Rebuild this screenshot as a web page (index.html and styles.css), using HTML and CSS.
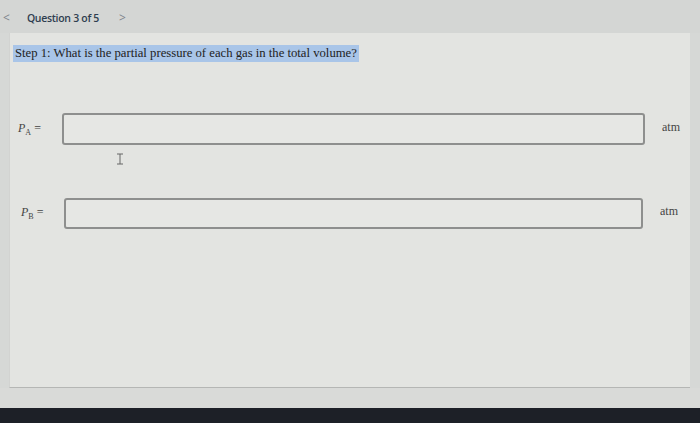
FILE: index.html
```html
<!DOCTYPE html>
<html>
<head>
<meta charset="utf-8">
<link rel="stylesheet" href="styles.css">
</head>
<body>
<div class="screen">
  <div class="header">
    <span class="nav prev">&lt;</span>
    <span class="qtitle">Question 3 of 5</span>
    <span class="nav next">&gt;</span>
  </div>
  <div class="panel">
    <div class="step"><span class="hl">Step 1: What is the partial pressure of each gas in the total volume?</span></div>
    <div class="row row-a">
      <span class="label"><i>P</i><sub>A</sub> =</span>
      <div class="box"></div>
      <span class="unit">atm</span>
    </div>
    <div class="cursor">
      <svg width="8" height="12" viewBox="0 0 8 12"><path d="M1 1h6M4 1v10M1 11h6" stroke="#666" stroke-width="1" fill="none"/></svg>
    </div>
    <div class="row row-b">
      <span class="label"><i>P</i><sub>B</sub> =</span>
      <div class="box"></div>
      <span class="unit">atm</span>
    </div>
  </div>
  <div class="gap"></div>
  <div class="bezel"></div>
</div>
</body>
</html>
```
FILE: styles.css
```css
html, body {
  margin: 0;
  padding: 0;
}
body {
  width: 700px;
  height: 423px;
  overflow: hidden;
  background: #d6d8d6;
}
.screen {
  display: flex;
  flex-direction: column;
  height: 423px;
}
.header {
  height: 33px;
  display: flex;
  align-items: center;
  background: #d4d6d4;
  font-family: "Open Sans", "Liberation Sans", sans-serif;
  color: #2f3e50;
  padding-top: 2px;
  box-sizing: border-box;
}
.nav {
  font-size: 12px;
  color: #7f858c;
}
.prev {
  margin-left: 3px;
}
.qtitle {
  font-size: 10.5px;
  font-weight: 600;
  margin-left: 17px;
  letter-spacing: -0.3px;
}
.next {
  margin-left: 20px;
}
.panel {
  margin-left: 9px;
  width: 681px;
  height: 355px;
  background: #e3e4e1;
  border-bottom: 1px solid #b5b6b4;
  border-left: 1px solid #d2d3d1;
  box-sizing: border-box;
  padding-top: 10px;
  position: relative;
  font-family: "Liberation Serif", "Times New Roman", serif;
  color: #333;
}
.step {
  padding-left: 3px;
  height: 17px;
}
.hl {
  background: #a9c5e8;
  font-size: 12.7px;
  line-height: 17px;
  color: #222;
  padding: 0 2px 0 2px;
  display: inline-block;
}
.row {
  display: flex;
  align-items: center;
}
.row-a {
  margin-top: 53px;
  height: 32px;
}
.row-b {
  margin-top: 53px;
  height: 31px;
}
.label {
  font-size: 12px;
  color: #444;
  width: 52px;
  padding-left: 8px;
  box-sizing: border-box;
  white-space: nowrap;
}
.label sub {
  font-size: 8px;
}
.row-b .label {
  padding-left: 11px;
  width: 54px;
}
.box {
  width: 583px;
  height: 100%;
  border: 2px solid #8e8f8e;
  border-radius: 3px;
  box-sizing: border-box;
  background: #e6e7e4;
}
.row-b .box {
  width: 579px;
}
.unit {
  font-size: 12px;
  color: #444;
  margin-left: 17px;
  margin-top: -4px;
}
.cursor {
  position: absolute;
  left: 106px;
  top: 118px;
}
.gap {
  height: 20px;
  background: #d9dad8;
}
.bezel {
  flex: 1;
  background: #1d2027;
}
```
